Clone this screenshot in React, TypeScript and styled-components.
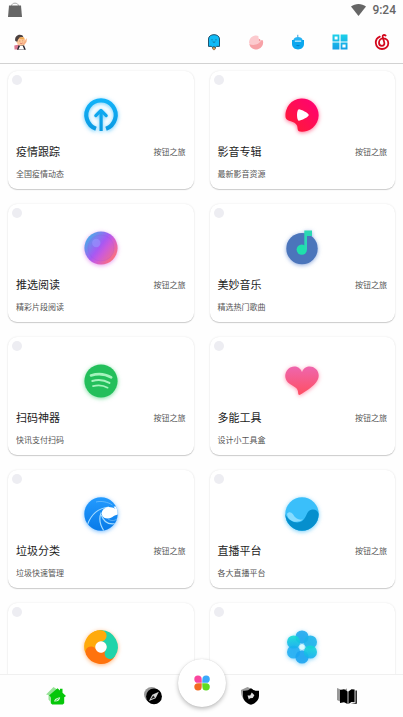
import React from "react";
import styled, { createGlobalStyle, css } from "styled-components";

const GlobalStyle = createGlobalStyle`
  * { box-sizing: border-box; }
  body {
    margin: 0;
    background: #fefefe;
    font-family: Roboto, "Noto Sans CJK SC", sans-serif;
    color: #222;
  }
`;

const Screen = styled.div`
  display: flex;
  flex-direction: column;
  height: 100vh;
  overflow: hidden;
`;

const StatusBar = styled.div`
  display: flex;
  align-items: center;
  justify-content: space-between;
  height: 20px;
  padding: 0 7px 0 8px;
  flex: none;
  color: #666;
`;

const StatusRight = styled.div`
  display: flex;
  align-items: center;
  gap: 6px;
  font-size: 12px;
  line-height: 20px;
  font-weight: 500;
`;

const Header = styled.header`
  display: flex;
  align-items: center;
  height: 44px;
  flex: none;
  border-bottom: 1px solid #d2d2d2;
`;

const Actions = styled.div`
  display: flex;
  margin-left: auto;
`;

const plainButton = css`
  display: flex;
  align-items: center;
  justify-content: center;
  padding: 0;
  border: 0;
  background: none;
  cursor: pointer;
`;

const IconButton = styled.button`
  ${plainButton}
  width: 42px;
  height: 40px;
`;

const Content = styled.main`
  flex: 1;
  min-height: 0;
  overflow: hidden;
  padding: 7px 8px 0;
`;

const Grid = styled.div`
  display: grid;
  grid-template-columns: 1fr 1fr;
  gap: 15px 16px;
`;

const Card = styled.a`
  display: flex;
  flex-direction: column;
  height: 118px;
  padding: 4px 8px 8px;
  border-radius: 9px;
  background: #fff;
  box-shadow: 0 1px 1px rgba(0, 0, 0, 0.18), 0 0 2px rgba(0, 0, 0, 0.1);
  color: inherit;
  text-decoration: none;
`;

const Dot = styled.span`
  width: 10px;
  height: 10px;
  margin-left: -4px;
  border-radius: 50%;
  background: #ededf2;
`;

const Art = styled.span<{ $glow: string }>`
  display: flex;
  justify-content: center;
  margin-top: 13px;
  svg {
    overflow: visible;
    filter: drop-shadow(0 1px 2px ${(p) => p.$glow});
  }
`;

const TitleRow = styled.span`
  display: flex;
  align-items: center;
  justify-content: space-between;
  height: 16px;
  margin-top: 13px;
`;

const Title = styled.span`
  font-size: 11px;
  line-height: 16px;
  color: #1c1c1c;
`;

const Note = styled.span`
  font-size: 8px;
  line-height: 12px;
  color: #555;
`;

const Summary = styled(Note)`
  margin-top: 8px;
`;

const TabBar = styled.nav`
  position: relative;
  display: flex;
  flex: none;
  height: 43px;
  padding: 0 8px;
  background: #fefefe;
  border-top: 1px solid #f0f0f0;
`;

const Tab = styled.button`
  ${plainButton}
  flex: 1;
`;

const CenterButton = styled.button`
  ${plainButton}
  position: absolute;
  left: 50%;
  top: -16px;
  width: 48px;
  height: 48px;
  margin-left: -24px;
  border-radius: 50%;
  background: #fff;
  box-shadow: 0 2px 4px rgba(0, 0, 0, 0.25), 0 0 1px rgba(0, 0, 0, 0.15);
`;

const Svg34 = ({ children }: { children: React.ReactNode }) => (
  <svg width="34" height="34" viewBox="0 0 34 34" aria-hidden="true">
    {children}
  </svg>
);

const Svg20 = ({ children }: { children: React.ReactNode }) => (
  <svg width="20" height="20" viewBox="0 0 20 20" aria-hidden="true">
    {children}
  </svg>
);

const UploadArt = () => (
  <Svg34>
    <defs>
      <linearGradient id="up" x1="0" y1="0" x2="0" y2="34" gradientUnits="userSpaceOnUse">
        <stop offset="0" stopColor="#12b4fa" />
        <stop offset="1" stopColor="#0a98e0" />
      </linearGradient>
    </defs>
    <g fill="none" stroke="url(#up)">
      <path d="M12 30.8A14.7 14.7 0 1 1 22 30.8" strokeWidth="4.2" />
      <path d="M17.1 12V33" strokeWidth="3.2" />
      <path d="M11.8 17.6L17 12.4L22.2 17.6" strokeWidth="3.2" strokeLinecap="round" strokeLinejoin="round" />
    </g>
  </Svg34>
);

const VideoArt = () => (
  <Svg34>
    <defs>
      <linearGradient id="vid" x1="0" y1="1" x2="1" y2="0">
        <stop offset="0" stopColor="#ff1d2e" />
        <stop offset="1" stopColor="#ff0078" />
      </linearGradient>
    </defs>
    <path
      d="M.6 19.5A16.6 16.6 0 1 1 15 33.6C12 33.2 13 30 12 27.5C10 22.5 1.6 24 .6 19.5Z"
      fill="url(#vid)"
    />
    <path d="M14 11.2C16 11.3 23.6 15 23.8 17C23.7 19 16 22.7 13.8 22.7C11.4 22.3 11.4 11.4 14 11.2Z" fill="#fff" />
  </Svg34>
);

const OrbArt = () => (
  <Svg34>
    <defs>
      <linearGradient id="orb" x1=".05" y1=".2" x2=".9" y2=".85">
        <stop offset="0" stopColor="#48ace8" />
        <stop offset=".45" stopColor="#a65bf2" />
        <stop offset=".62" stopColor="#cf5cd8" />
        <stop offset="1" stopColor="#ff7176" />
      </linearGradient>
    </defs>
    <circle cx="17" cy="17" r="16.6" fill="url(#orb)" />
    <circle cx="17" cy="17" r="13" fill="#b050ff" fillOpacity=".12" stroke="#8050d0" strokeOpacity=".2" strokeWidth=".7" />
    <circle cx="12.3" cy="12" r="4.2" fill="#9a94ff" fillOpacity=".6" />
  </Svg34>
);

const MusicArt = () => (
  <Svg34>
    <circle cx="17" cy="17.6" r="15.7" fill="#4b75bb" />
    <circle cx="16.8" cy="18.6" r="5.2" fill="#1fe0ab" />
    <path d="M19.3 -.4H27V5H22V18.6H19.3Z" fill="#2ad9b4" />
  </Svg34>
);

const WavesArt = () => (
  <Svg34>
    <circle cx="17" cy="17" r="16.6" fill="#23bf5b" />
    <g fill="none" stroke="#a5f3bd" strokeLinecap="round">
      <path d="M7 11.4C13.5 9.4 21.5 10 27.2 13.4" strokeWidth="2.6" />
      <path d="M8.3 17C13.8 15.4 20.3 16 25.4 18.9" strokeWidth="2.1" />
      <path d="M9 22.1C13.8 20.8 19.2 21.1 23.6 23.7" strokeWidth="1.7" />
    </g>
  </Svg34>
);

const HeartArt = () => (
  <Svg34>
    <defs>
      <linearGradient id="heart" x1="0" y1="0" x2="0" y2="1">
        <stop offset="0" stopColor="#ee66ae" />
        <stop offset="1" stopColor="#ff4f62" />
      </linearGradient>
    </defs>
    <path
      d="M17 8.2C14.5 1.5 7 1.2 3 5.2C-.8 9-.6 15 3 18.5C6 21.5 12.6 23 13 27.5C13.2 31 13.8 31.6 15.5 30.5C20 27.5 25.8 24.7 31 18.5C34.7 14 34.5 8.2 30.8 5C26.8 1.3 19.5 1.5 17 8.2Z"
      fill="url(#heart)"
    />
  </Svg34>
);

const SurfArt = () => (
  <Svg34>
    <defs>
      <linearGradient id="surf" x1="0" y1="0" x2="0" y2="1">
        <stop offset="0" stopColor="#239bff" />
        <stop offset="1" stopColor="#087ae8" />
      </linearGradient>
      <clipPath id="surfClip">
        <circle cx="17" cy="17" r="16.7" />
      </clipPath>
    </defs>
    <g clipPath="url(#surfClip)">
      <rect width="34" height="34" fill="url(#surf)" />
      <g fill="none" stroke="#a5dcff">
        <path d="M3.5 27.5C7.5 17 13.5 11.5 25 10" strokeWidth="1.1" />
        <path d="M12 5C17 3.6 24 5 28.5 8" strokeWidth=".8" strokeOpacity=".6" />
        <path d="M17.3 15.5C14.8 21 16 28 20 34" strokeWidth="1.2" />
        <path d="M17.4 18C19.5 25 25 27.8 32 26.5" strokeWidth="1.2" />
        <path d="M24 22C27 24 30 24 33 22" strokeWidth=".8" strokeOpacity=".6" />
      </g>
      <path
        d="M36 8C33 10 31.5 9 29.5 9.8L31.5 12C28.5 10.4 25.5 9.6 22.5 10.4C18.8 11.5 17 15 18 18C19.3 22 24.5 22.4 28 20.3C30.5 18.8 32 17.4 36 17.4Z"
        fill="#fff"
      />
    </g>
  </Svg34>
);

const SeaArt = () => (
  <Svg34>
    <defs>
      <clipPath id="seaClip">
        <circle cx="17" cy="17" r="16.7" />
      </clipPath>
    </defs>
    <g clipPath="url(#seaClip)">
      <rect width="34" height="34" fill="#3abffa" />
      <path d="M0 17C4 24 10 26.5 15 25C22 23 20.5 13.5 27 12.5C30.5 12 33 14 34 17V34H0Z" fill="#068fcd" />
      <path d="M2 16.8C3.5 14.5 6.3 14.7 8 17.3C10.6 21.6 13 23.3 18 22.6C11.5 27.3 2.7 24.3 2 16.8Z" fill="#87dcff" />
    </g>
  </Svg34>
);

const RingArt = () => (
  <Svg34>
    <g fill="none" strokeWidth="11.2" strokeLinecap="round">
      <path d="M5.9 19A11.2 11.2 0 0 1 17 5.8" stroke="#ffaa0b" />
      <path d="M25 25A11.2 11.2 0 0 1 7 22" stroke="#ff730d" />
      <path d="M17 5.8A11.2 11.2 0 0 1 26.2 23.4" stroke="#21d4aa" />
      <path d="M9 9.2A11.2 11.2 0 0 1 17 5.8" stroke="#ffaa0b" />
    </g>
    <circle cx="17" cy="17" r="5.7" fill="#fff" />
  </Svg34>
);

const FlowerArt = () => (
  <Svg34>
    <defs>
      <linearGradient id="petalA" x1="0" y1="0" x2="0" y2="1">
        <stop offset="0" stopColor="#12dcd0" />
        <stop offset="1" stopColor="#16aef0" />
      </linearGradient>
    </defs>
    <g fillOpacity=".88">
      <circle cx="17" cy="7" r="6.6" fill="#1ea9ee" />
      <circle cx="8.6" cy="22" r="6.6" fill="#22aef3" />
      <circle cx="25.4" cy="12" r="6.6" fill="#1cb4ea" />
      <circle cx="17" cy="27" r="6.6" fill="#1ca4f0" />
      <circle cx="8.6" cy="12" r="6.6" fill="url(#petalA)" />
      <circle cx="25.4" cy="22" r="6.6" fill="url(#petalA)" />
    </g>
    <path d="M17 14L19.6 15.5V18.5L17 20L14.4 18.5V15.5Z" fill="#d9fbff" />
  </Svg34>
);

const BagIcon = () => (
  <svg width="14" height="16" viewBox="0 0 14 16" aria-hidden="true">
    <path d="M3.5 4C3.5 .2 10.5 .2 10.5 4" fill="none" stroke="#aaa" strokeWidth="1" />
    <path d="M1 3.6H13L14 15H0Z" fill="#666" />
  </svg>
);

const WifiIcon = () => (
  <svg width="15" height="12" viewBox="0 0 15 12" aria-hidden="true">
    <path d="M0 2.6C4.2 -.8 10.8 -.8 15 2.6L7.5 12Z" fill="#666" />
  </svg>
);

const AvatarIcon = () => (
  <Svg20>
    <path d="M3.3 13.5L8 12.4L10 17.5H3.5Z" fill="#dc7890" />
    <path d="M6 17.8L7.5 13.6L13 13.2L14.8 17.8Z" fill="#25222c" />
    <path d="M7.4 17.4L9 14H11.8L13.2 17.4Z" fill="#fff" />
    <circle cx="10" cy="9" r="4.6" fill="#ffc89a" />
    <path d="M12 11.5L16 6L15.5 10L12.7 13.8Z" fill="#f6b085" />
    <path d="M4.3 9C3.1 3.8 8 1.5 11.3 3.3L12.5 5.2C9.5 4.6 7 6 6.3 9.8Z" fill="#4b4140" />
    <path d="M7.7 5.8L12.6 5.3L13 7.5L9 7Z" fill="#efa94f" />
    <path d="M8.3 9H9.3M11.4 8.8H12.2" stroke="#a06a50" strokeWidth=".7" />
    <path d="M9.2 11.2Q10.3 12.2 11.6 11" fill="none" stroke="#c65252" strokeWidth=".7" />
  </Svg20>
);

const PopsicleIcon = () => (
  <Svg20>
    <path d="M8.6 13.5H11.4V17L10 18L8.6 17Z" fill="#dca050" stroke="#553b22" strokeWidth=".5" />
    <path
      d="M4.5 7C4.5 1.2 15.5 1.2 15.5 7V14.4H12.5L11.3 15.5L10 14.6L8.5 15.3L7.2 14.4H4.5Z"
      fill="#10bbf6"
      stroke="#174560"
      strokeWidth=".9"
    />
    <path d="M7.4 7.8H8.6M11.4 7.8H12.6M8.7 9.8Q10 10.9 11.3 9.8" fill="none" stroke="#174560" strokeWidth=".6" />
  </Svg20>
);

const CandyIcon = () => (
  <Svg20>
    <path d="M3 10.5A7 7 0 0 1 12.5 4C11.8 6.4 13.5 8.4 16.9 8.5A7 7 0 1 1 3 10.5Z" fill="#fccace" />
    <path d="M3.2 12.2C7.5 13.6 12.5 13.1 15.4 8.2L16.9 8.5A7 7 0 0 1 3.2 12.2Z" fill="#f7a2a7" />
    <circle cx="13.6" cy="8" r=".7" fill="#ee777e" />
  </Svg20>
);

const PotIcon = () => (
  <Svg20>
    <path d="M9.8 5V2.8" stroke="#3d9fd8" strokeWidth="1" />
    <path d="M5.4 8C5.8 4 14.2 4 14.6 8Z" fill="#25b3f4" />
    <path d="M4 8H16V12C16 19.2 4 19.2 4 12Z" fill="#0ba7ee" />
    <path d="M6.8 8.5H13.2V9.8H6.8Z" fill="#c4efff" />
    <path d="M8 13H12Q10 15.5 8 13Z" fill="#087fc7" />
  </Svg20>
);

const TilesIcon = () => (
  <Svg20>
    <defs>
      <linearGradient id="tiles" x1="0" y1="0" x2="0" y2="1">
        <stop offset="0" stopColor="#1dd1e9" />
        <stop offset="1" stopColor="#149fe6" />
      </linearGradient>
    </defs>
    <path
      d="M2.5 2.5H9.4V9.4H2.5ZM10.6 2.5H17.5V9.4H10.6ZM2.5 10.6H9.4V17.5H2.5ZM10.6 10.6H17.5V17.5H10.6ZM4.6 4.5V7.6H7.6V4.5ZM12.4 12.4V15.6H15.6V12.4Z"
      fill="url(#tiles)"
      fillRule="evenodd"
    />
  </Svg20>
);

const SpiralIcon = () => (
  <Svg20>
    <g fill="none" stroke="#d3081d" strokeWidth="1.8" strokeLinecap="round">
      <path d="M7.8 4.6C4.8 5.8 3.7 8.3 3.8 11C4 14.5 6.8 17 10 17C13.5 17 16.3 14.6 16.3 11.2C16.3 8.2 14 6.4 11 6.4C8.5 6.4 7 8.5 7 10.8C7 12.6 8.3 13.8 9.9 13.8C11.6 13.8 12.7 12.4 12.3 10.6L10.7 4.7C10.4 3.2 12 2.4 13.6 3.5" />
    </g>
  </Svg20>
);

const HomeIcon = () => (
  <Svg20>
    <path d="M0 8.5L7.5 1L12 4L4.5 12V16L2.5 13.5V9Z" fill="#96e296" />
    <path d="M3 9.5L11.5 2.3L14 4.5V2.7H16.5V6.8L20 10L18.2 11.2V17.2L16.7 18.5H6.2L4.8 17.2V11Z" fill="#06c70a" />
    <path d="M8.2 15.5C8.5 12.5 11 12 14.2 11.2C13.8 14 12 15.8 8.2 15.5Z" fill="#d8f8d8" />
    <path d="M9.5 14.8L12.5 12.6" stroke="#06c70a" strokeWidth=".8" />
  </Svg20>
);

const CompassIcon = () => (
  <Svg20>
    <circle cx="8.6" cy="8.6" r="7.6" fill="#999" />
    <circle cx="11" cy="10.4" r="7.9" fill="#000" />
    <path d="M6 15L9.3 8.7L15.9 5.7L12.6 12.3Z" fill="#d7d7d7" />
    <path d="M7.8 13.3L10.2 9.6L12 11.4Z" fill="#222" />
  </Svg20>
);

const ShieldIcon = () => (
  <Svg20>
    <path d="M1 4L7.5 1L13 3.5V10L7 16C3 14 1 10 1 4Z" fill="#999" />
    <path d="M3 4.7Q7.5 5.5 11 2.3Q14.5 5.5 19 4.7V10C19 14.2 15.5 17.5 11 18.8C6.5 17.5 3 14.2 3 10Z" fill="#000" />
    <path d="M7.5 9.4L10.2 9.6L11.8 6.6L14.4 9.2L12.7 12L10 12.2L8.8 13.6L8.2 11.6Z" fill="#ddd" />
  </Svg20>
);

const BookIcon = () => (
  <Svg20>
    <path d="M0 2L5.5 4.3L10 2.5V14L4 16L0 14Z" fill="#999" />
    <path d="M3 4L7 3.2L10.6 5.5V18L7 16.2L3 17Z" fill="#000" />
    <path d="M11.4 5.5L14.5 3.2L17.6 3.4V16.2L14.5 16L11.4 18Z" fill="#000" />
    <path d="M18.5 4.6H19.8V17.8H13.5L18.5 17Z" fill="#000" />
  </Svg20>
);

const CloverIcon = () => (
  <Svg20>
    <path d="M9.8 9.8H6A3.7 3.7 0 1 1 9.7 6Z" fill="#fa469f" />
    <path d="M10.2 9.8L10.4 6A3.7 3.7 0 1 1 14 9.8Z" fill="#3ba9fb" />
    <path d="M9.8 10.2L9.7 14A3.7 3.7 0 1 1 6 10.2Z" fill="#f26a22" />
    <path d="M10.2 10.2H14A3.7 3.7 0 1 1 10.4 14Z" fill="#5fdb22" />
  </Svg20>
);

const cards = [
  { title: "疫情跟踪", summary: "全国疫情动态", glow: "rgba(20,175,250,.65)", Icon: UploadArt },
  { title: "影音专辑", summary: "最新影音资源", glow: "rgba(255,20,80,.6)", Icon: VideoArt },
  { title: "推选阅读", summary: "精彩片段阅读", glow: "rgba(215,90,230,.6)", Icon: OrbArt },
  { title: "美妙音乐", summary: "精选热门歌曲", glow: "rgba(70,115,200,.6)", Icon: MusicArt },
  { title: "扫码神器", summary: "快讯支付扫码", glow: "rgba(35,200,95,.6)", Icon: WavesArt },
  { title: "多能工具", summary: "设计小工具盒", glow: "rgba(255,85,130,.6)", Icon: HeartArt },
  { title: "垃圾分类", summary: "垃圾快速管理", glow: "rgba(30,145,255,.6)", Icon: SurfArt },
  { title: "直播平台", summary: "各大直播平台", glow: "rgba(30,175,245,.6)", Icon: SeaArt },
  { title: "", summary: "", glow: "rgba(255,130,30,.6)", Icon: RingArt },
  { title: "", summary: "", glow: "rgba(30,175,245,.6)", Icon: FlowerArt },
];

const actions = [
  { label: "雪糕", icon: <PopsicleIcon /> },
  { label: "糖果", icon: <CandyIcon /> },
  { label: "小罐", icon: <PotIcon /> },
  { label: "应用", icon: <TilesIcon /> },
  { label: "音乐", icon: <SpiralIcon /> },
];

const tabs = [
  { label: "首页", icon: <HomeIcon /> },
  { label: "发现", icon: <CompassIcon /> },
  { label: "安全", icon: <ShieldIcon /> },
  { label: "阅读", icon: <BookIcon /> },
];

export default function App() {
  return (
    <Screen lang="zh-CN">
      <GlobalStyle />
      <StatusBar>
        <BagIcon />
        <StatusRight>
          <WifiIcon />
          <time>9:24</time>
        </StatusRight>
      </StatusBar>
      <Header>
        <IconButton aria-label="头像">
          <AvatarIcon />
        </IconButton>
        <Actions>
          {actions.map((a) => (
            <IconButton key={a.label} aria-label={a.label}>
              {a.icon}
            </IconButton>
          ))}
        </Actions>
      </Header>
      <Content>
        <Grid>
          {cards.map(({ title, summary, glow, Icon }, i) => (
            <Card key={i} href="#">
              <Dot />
              <Art $glow={glow}>
                <Icon />
              </Art>
              {title && (
                <>
                  <TitleRow>
                    <Title>{title}</Title>
                    <Note>按钮之旅</Note>
                  </TitleRow>
                  <Summary>{summary}</Summary>
                </>
              )}
            </Card>
          ))}
        </Grid>
      </Content>
      <TabBar>
        {tabs.map((t) => (
          <Tab key={t.label} aria-label={t.label}>
            {t.icon}
          </Tab>
        ))}
        <CenterButton aria-label="菜单">
          <CloverIcon />
        </CenterButton>
      </TabBar>
    </Screen>
  );
}
